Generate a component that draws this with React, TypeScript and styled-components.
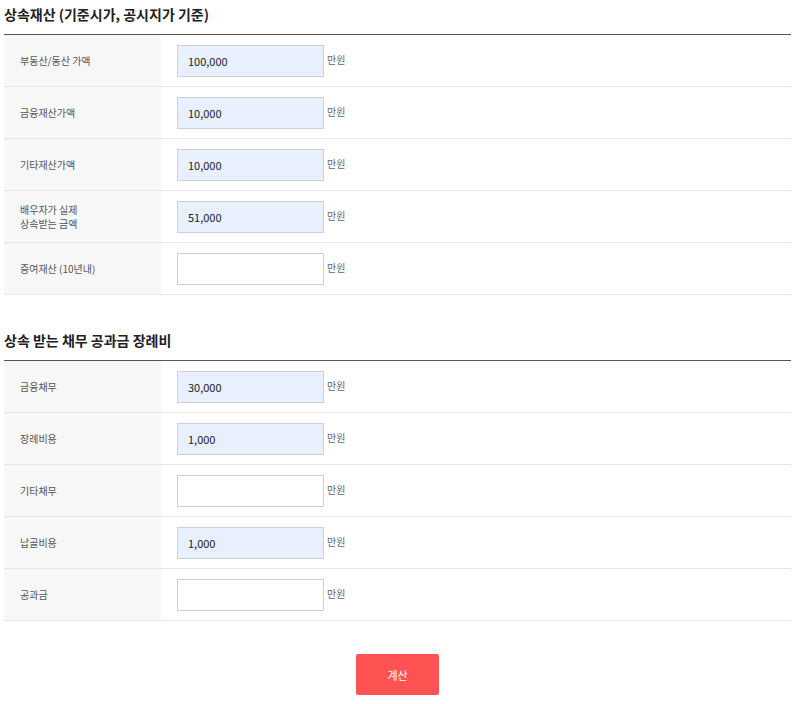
import React from "react";
import styled, { createGlobalStyle } from "styled-components";

const Global = createGlobalStyle`
  html, body { margin: 0; padding: 0; background: #fff; }
  body { font-family: "Noto Sans CJK KR", "Noto Sans", sans-serif; color: #222; }
  * { box-sizing: border-box; }
`;

const Page = styled.div`
  width: 800px;
  padding: 3px 9px 0 4px;
`;

const Section = styled.section<{ $gap?: number }>`
  margin-top: ${(p) => p.$gap ?? 0}px;
`;

const Title = styled.h2`
  margin: 0 0 9px;
  font-size: 14px;
  line-height: 22px;
  font-weight: 700;
  color: #222;
  letter-spacing: 0;
`;

const Table = styled.div`
  border-top: 1px solid #555;
`;

const Row = styled.div`
  display: grid;
  grid-template-columns: 157px 1fr;
  border-bottom: 1px solid #e6e6e6;
  height: 52px;
`;

const Label = styled.div`
  background: #f7f7f7;
  display: flex;
  align-items: center;
  padding-left: 16px;
  font-size: 10px;
  line-height: 14px;
  color: #555;
  white-space: pre-line;
`;

const Cell = styled.div`
  display: flex;
  align-items: center;
  padding-left: 16px;
`;

const Input = styled.input<{ $filled: boolean }>`
  width: 147px;
  height: 32px;
  border: 1px solid #cccfd4;
  background: ${(p) => (p.$filled ? "#e8f0fe" : "#fff")};
  padding: 0 10px;
  font-family: "Noto Sans CJK KR", "Noto Sans", sans-serif;
  font-size: 11px;
  color: #222;
  outline: none;
`;

const Unit = styled.span`
  margin-left: 3px;
  margin-top: -3px;
  font-size: 10px;
  color: #666;
`;

const Actions = styled.div`
  display: flex;
  justify-content: center;
  margin-top: 33px;
`;

const Button = styled.button`
  width: 83px;
  height: 41px;
  border: none;
  border-radius: 2px;
  background: #ff5353;
  color: #fff;
  font-family: "Noto Sans CJK KR", "Noto Sans", sans-serif;
  font-size: 11px;
  cursor: pointer;
`;

type Field = { label: string; value: string };

const assets: Field[] = [
  { label: "부동산/동산 가액", value: "100,000" },
  { label: "금융재산가액", value: "10,000" },
  { label: "기타재산가액", value: "10,000" },
  { label: "배우자가 실제\n상속받는 금액", value: "51,000" },
  { label: "증여재산 (10년내)", value: "" },
];

const debts: Field[] = [
  { label: "금융채무", value: "30,000" },
  { label: "장례비용", value: "1,000" },
  { label: "기타채무", value: "" },
  { label: "납골비용", value: "1,000" },
  { label: "공과금", value: "" },
];

function FieldRows({ fields }: { fields: Field[] }) {
  return (
    <Table>
      {fields.map((f) => (
        <Row key={f.label}>
          <Label>{f.label}</Label>
          <Cell>
            <Input $filled={f.value !== ""} defaultValue={f.value} />
            <Unit>만원</Unit>
          </Cell>
        </Row>
      ))}
    </Table>
  );
}

export default function App() {
  return (
    <Page>
      <Global />
      <Section>
        <Title>상속재산 (기준시가, 공시지가 기준)</Title>
        <FieldRows fields={assets} />
      </Section>
      <Section $gap={34}>
        <Title>상속 받는 채무 공과금 장례비</Title>
        <FieldRows fields={debts} />
      </Section>
      <Actions>
        <Button type="button">계산</Button>
      </Actions>
    </Page>
  );
}
